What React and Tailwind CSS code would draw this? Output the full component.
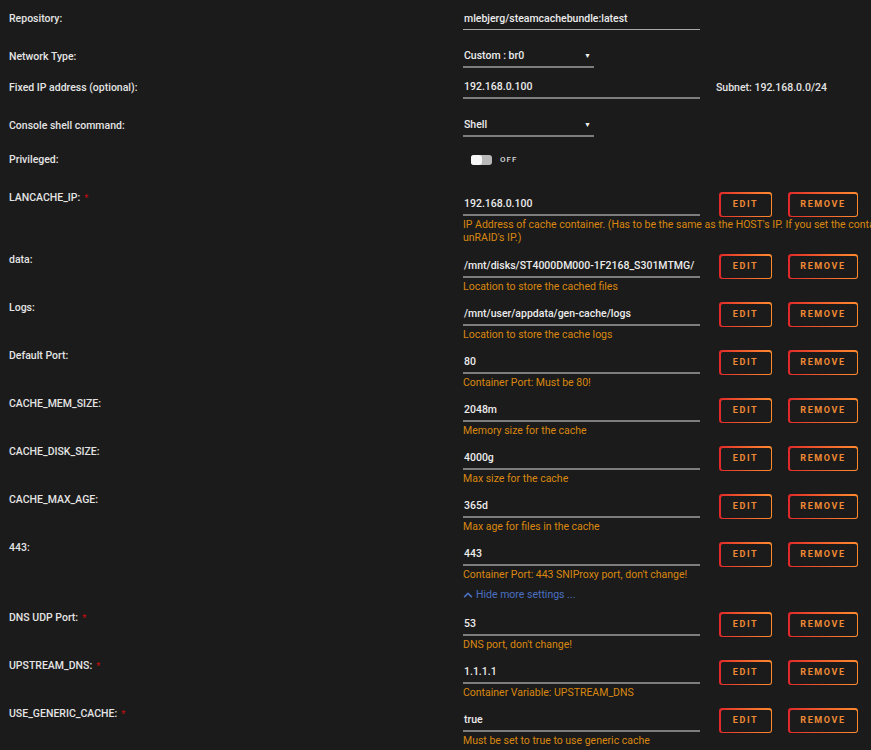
import { FaChevronUp } from "react-icons/fa";

const font = { fontFamily: "Roboto, 'Liberation Sans', Arial, sans-serif" };

const Label = ({ text, required }) => (
    <div className="w-[463px] shrink-0 pl-[9px] text-[10.5px] font-medium leading-[12px] text-[#e4e4e4]">
        {text}
        {required && <span className="ml-[4px] text-[9px] text-[#c40d0d]">*</span>}
    </div>
);

const GradButton = ({ children, width }) => (
    <div className={`${width} h-[25px] shrink-0 rounded-[3px] bg-linear-to-r from-[#e0262a] to-[#ff8a2e] p-[1.5px]`}>
        <div className="flex h-full w-full items-center justify-center rounded-[2px] bg-[#1b1b1b] text-[9px] font-bold tracking-[1.6px] text-[#f08a35]">
            {children}
        </div>
    </div>
);

const EnvRow = ({ label, value, desc, required }) => (
    <div className={`flex items-start ${desc.length > 1 ? "mb-[10px]" : "mb-[9px]"}`}>
        <Label text={label} required={required} />
        <div className="w-[237px] shrink-0">
            <div className="flex h-[24px] items-center border-b-2 border-[#7d7d7d] pl-[1px] pt-[1px] text-[10.5px] font-medium text-[#ececec]">
                {value}
            </div>
            <div className="mt-[2px] whitespace-nowrap text-[10.5px] leading-[13px] text-[#d98710]">
                {desc.map((line) => (
                    <div key={line}>{line}</div>
                ))}
            </div>
        </div>
        <div className="ml-[19px] flex gap-[16px]">
            <GradButton width="w-[53px]">EDIT</GradButton>
            <GradButton width="w-[70px]">REMOVE</GradButton>
        </div>
    </div>
);

const TopRow = ({ label, children, className }) => (
    <div className={`flex h-[22px] items-center ${className}`}>
        <Label text={label} />
        {children}
    </div>
);

const envRows = [
    {
        label: "LANCACHE_IP:",
        value: "192.168.0.100",
        required: true,
        desc: [
            "IP Address of cache container. (Has to be the same as the HOST's IP. If you set the container to a custom IP, use that instead of the",
            "unRAID's IP.)",
        ],
    },
    { label: "data:", value: "/mnt/disks/ST4000DM000-1F2168_S301MTMG/", desc: ["Location to store the cached files"] },
    { label: "Logs:", value: "/mnt/user/appdata/gen-cache/logs", desc: ["Location to store the cache logs"] },
    { label: "Default Port:", value: "80", desc: ["Container Port: Must be 80!"] },
    { label: "CACHE_MEM_SIZE:", value: "2048m", desc: ["Memory size for the cache"] },
    { label: "CACHE_DISK_SIZE:", value: "4000g", desc: ["Max size for the cache"] },
    { label: "CACHE_MAX_AGE:", value: "365d", desc: ["Max age for files in the cache"] },
    { label: "443:", value: "443", desc: ["Container Port: 443 SNIProxy port, don't change!"] },
];

const moreRows = [
    { label: "DNS UDP Port:", value: "53", required: true, desc: ["DNS port, don't change!"] },
    { label: "UPSTREAM_DNS:", value: "1.1.1.1", required: true, desc: ["Container Variable: UPSTREAM_DNS"] },
    { label: "USE_GENERIC_CACHE:", value: "true", required: true, desc: ["Must be set to true to use generic cache"] },
];

const Select = ({ value }) => (
    <div className="flex h-[22px] w-[131px] items-center justify-between border-b-2 border-[#7d7d7d] pl-[1px] pr-[3px] text-[10.5px] font-medium text-[#ececec]">
        <span>{value}</span>
        <span className="text-[7px] leading-none text-[#f0f0f0]">▼</span>
    </div>
);

export default function App() {
    return (
        <div className="min-h-screen w-full overflow-hidden bg-[#1b1b1b] pt-[8px]" style={font}>
            <TopRow label="Repository:" className="mb-[16px]">
                <div className="flex h-[22px] w-[237px] items-center border-b border-[#a8a8a8] pl-[1px] text-[10.5px] font-medium text-[#ececec]">
                    mlebjerg/steamcachebundle:latest
                </div>
            </TopRow>
            <TopRow label="Network Type:" className="mb-[9px]">
                <Select value="Custom : br0" />
            </TopRow>
            <TopRow label="Fixed IP address (optional):" className="mb-[16px]">
                <div className="flex h-[22px] w-[237px] items-center border-b-2 border-[#7d7d7d] pl-[1px] text-[10.5px] font-medium text-[#ececec]">
                    192.168.0.100
                </div>
                <div className="ml-[16px] text-[10.5px] font-medium text-[#e4e4e4]">Subnet: 192.168.0.0/24</div>
            </TopRow>
            <TopRow label="Console shell command:" className="mb-[12px]">
                <Select value="Shell" />
            </TopRow>
            <TopRow label="Privileged:" className="mb-[21px]">
                <div className="ml-[8px] flex items-center">
                    <div className="flex h-[10px] w-[21px] rounded-[3px] bg-[#b9b9b9]">
                        <div className="h-[10px] w-[11px] rounded-[3px] bg-[#f7f7f7]" />
                    </div>
                    <span className="ml-[8px] text-[8px] font-medium tracking-[1px] text-[#dcdcdc]">OFF</span>
                </div>
            </TopRow>

            {envRows.map((r) => (
                <EnvRow key={r.label} {...r} />
            ))}

            <div className="-mt-[1px] flex h-[23px] items-start">
                <div className="w-[463px] shrink-0" />
                <div className="flex items-center gap-[3px] text-[10.5px] leading-[12px] text-[#4a70c0]">
                    <FaChevronUp className="text-[10px]" />
                    <span>Hide more settings ...</span>
                </div>
            </div>

            {moreRows.map((r) => (
                <EnvRow key={r.label} {...r} />
            ))}
        </div>
    );
}
